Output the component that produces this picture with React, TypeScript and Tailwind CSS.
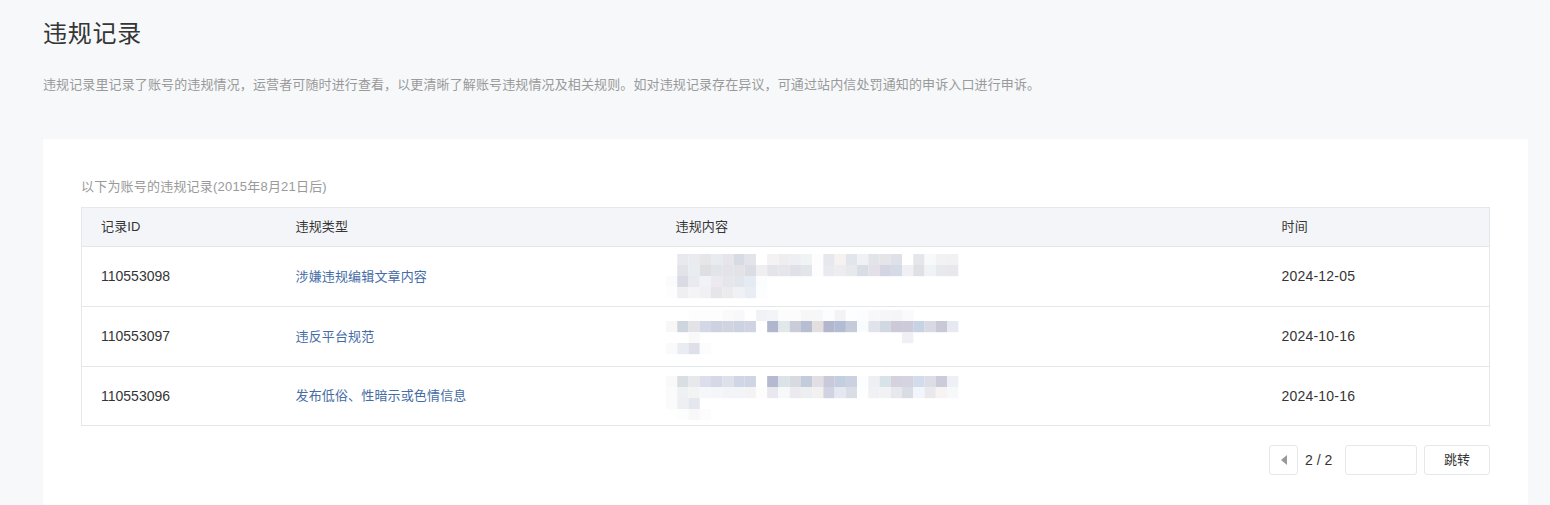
const fontStack = { fontFamily: '"Liberation Sans", "Noto Sans CJK SC", sans-serif' }

type Block = { top: number; start: number; colors: string[] }

// blurred text in the content column, one entry per line of mosaic tiles
const mosaics: Block[][] = [
  [
    { top: 6, start: 1, colors: ['e8e9ef', 'eaebef', 'e6e6e8', 'e8ecf0', 'e6e6ea', 'd8dbe3', 'e2e4ea', 'ffffff', 'f4f2f3', 'eeeef0', 'eeeff2', 'f1f4f5', 'fdfdfe', 'e6e8ee', 'f6f2ef', 'e2e5ec', 'f0f1f4', 'e3e3ea', 'e4e4e9', 'dfe1e8', 'ffffff', 'e3e6ea', 'f8f9fa', 'f2f2f5', 'f1f1f4'] },
    { top: 17, start: 1, colors: ['e2e3e8', 'e8edf1', 'dfdfe2', 'e1e4e8', 'e4e4e8', 'e3e2e7', 'dcdce5', 'eeeef3', 'e4e5ea', 'e6e6ea', 'dfe1e8', 'e2e5ea', 'fdfdfe', 'e9e9f0', 'edecef', 'e8e9ed', 'd9dde5', 'e3e1e7', 'd4d5e2', 'd5dbe6', 'f0f0f4', 'dee0e4', 'eff3f5', 'e8e9ed', 'e8e8ec'] },
    { top: 28, start: 0, colors: ['fafbfd', 'd9dae4', 'e9eaee', 'f0f2f7', 'eceaf0', 'e6e5e9', 'e1e5ec', 'e4ebf3', 'fafcfe'] },
    { top: 39, start: 0, colors: ['fdfdfd', 'efeff1', 'f4f4f6', 'f1f1f4', 'e6e5ea', 'ebebee', 'f0f1f4', 'e8edf3', 'fcfdfe'] },
  ],
  [
    { top: 2, start: 1, colors: ['ffffff', 'fdfdfd', 'fdfdfd', 'fdfdfd', 'fafafb', 'f8f8fa', 'ffffff', 'f1f2f6', 'f3f4f7', 'fcfcfc', 'fcfcfd', 'f7f7f8', 'f7f7f8', 'fcfdfe', 'f3f3f6', 'fefefe', 'fcfdfe', 'f8f8fa', 'f6f6f8', 'f5f5f7', 'fafafc'] },
    { top: 13, start: 0, colors: ['f9f7f5', 'cfd5de', 'e3e3e7', 'd4d8e6', 'cdd2e0', 'd1d3e0', 'cdd2e1', 'cfd3e2', 'ffffff', 'b0b6cd', 'e2e8e9', 'cacdd8', 'b8bed2', 'e3dfdf', 'b3b7ce', 'b2bcd5', 'c6cbd9', 'f9fcfd', 'e0e3ec', 'd1d8e2', 'cdc9d8', 'cdcad9', 'c6d3e5', 'd8d9e3', 'c9c8d7', 'e6e9f2'] },
    { top: 24, start: 2, colors: ['f9f9f9'] },
    { top: 24, start: 21, colors: ['f0f0f4'] },
    { top: 35, start: 0, colors: ['fafafa', 'e9edf3', 'dde0e8', 'fafcfe'] },
  ],
  [
    { top: 9, start: 0, colors: ['f9f9f9', 'd9dee2', 'e8e8ec', 'dcdeeb', 'd6d8e6', 'dfe1ea', 'd0d6e5', 'd0d5e5', 'ffffff', 'b5bad1', 'dae3e8', 'd8dae2', 'c3ccdb', 'e2dfe4', 'c9c9da', 'c3cfe0', 'cbd1e1', 'fcfdfe', 'ecf0f3', 'd8e2e9', 'd6d2dd', 'd5d3e0', 'd2dcea', 'dcdde7', 'cbcbda', 'edf0f5'] },
    { top: 20, start: 0, colors: ['fbfbfb', 'eff0f2', 'f3f3f4', 'f6f7fa', 'f5f6f9', 'f3f4f7', 'f3f4f7', 'f3f3f4', 'fdfdfd', 'e9e8ee', 'f7f8f8', 'ebebef', 'eceef0', 'f3f0f0', 'd0d3e1', 'e5e8f0', 'dadce6', 'fdfefe', 'f0f1f4', 'f1f2f4', 'e6e8ee', 'd9dce5', 'f3f5fc', 'e9e8ed', 'f6f3f2', 'f7f8f9'] },
    { top: 31, start: 0, colors: ['fbfbfb', 'eeeff3', 'e4e7ee'] },
    { top: 42, start: 1, colors: ['fdfdfd', 'f8f8f9', 'fcfcfd'] },
  ],
]

const records = [
  { id: '110553098', type: '涉嫌违规编辑文章内容', time: '2024-12-05' },
  { id: '110553097', type: '违反平台规范', time: '2024-10-16' },
  { id: '110553096', type: '发布低俗、性暗示或色情信息', time: '2024-10-16' },
]

function Mosaic({ blocks }: { blocks: Block[] }) {
  return (
    <svg width="300" height="58" className="block -ml-[10px]">
      {blocks.map((b, i) =>
        b.colors.map((c, j) => (
          <rect key={`${i}-${j}`} x={(b.start + j) * 11.24} y={b.top} width="11.3" height="11.2" fill={`#${c}`} />
        ))
      )}
    </svg>
  )
}

export default function App() {
  return (
    <div className="h-[505px] overflow-hidden bg-[#f6f8fa] px-[43px] pr-[22px]" style={fontStack}>
      <h1 className="pt-[17px] text-[24px] leading-[34px] font-normal tracking-[0.75px] text-[#353535]">违规记录</h1>
      <p className="mt-[17px] text-[13px] leading-[34px] tracking-[0.12px] text-[#9a9a9a]">
        违规记录里记录了账号的违规情况，运营者可随时进行查看，以更清晰了解账号违规情况及相关规则。如对违规记录存在异议，可通过站内信处罚通知的申诉入口进行申诉。
      </p>

      <div className="mt-[37px] rounded-[2px] bg-white px-[38px] pt-[38px] pb-[40px]">
        <div className="mb-[10px] text-[13px] leading-[20px] tracking-[0.2px] text-[#9a9a9a]">以下为账号的违规记录(2015年8月21日后)</div>

        <table className="w-full table-fixed border border-[#e4e8eb] border-collapse text-[13px] tracking-[0.15px] text-[#353535]">
          <colgroup>
            <col className="w-[195px]" />
            <col className="w-[380px]" />
            <col className="w-[606px]" />
            <col />
          </colgroup>
          <thead>
            <tr className="h-[39px] bg-[#f4f5f9] text-left">
              <th className="pl-[19px] font-normal">记录ID</th>
              <th className="pl-[19px] font-normal">违规类型</th>
              <th className="pl-[19px] font-normal">违规内容</th>
              <th className="pl-[19px] font-normal">时间</th>
            </tr>
          </thead>
          <tbody>
            {records.map((r, i) => (
              <tr key={r.id} className="h-[60px] border-t border-[#e4e8eb] last:h-[59px]">
                <td className="pl-[19px] text-[14px] tracking-normal">{r.id}</td>
                <td className="pl-[19px] text-[#456ca5]">{r.type}</td>
                <td className="pl-[19px]">
                  <Mosaic blocks={mosaics[i]} />
                </td>
                <td className="pl-[19px] text-[14px] tracking-[0.2px]">{r.time}</td>
              </tr>
            ))}
          </tbody>
        </table>

        <div className="mt-[19px] flex items-center justify-end text-[#353535]">
          <button className="flex h-[30px] w-[29px] items-center justify-center rounded-[3px] border border-[#e4e8eb] bg-white">
            <svg width="6" height="10" viewBox="0 0 6 10">
              <path d="M6 0 L6 10 L0 5 Z" fill="#9a9a9a" />
            </svg>
          </button>
          <span className="ml-[7px] w-[29px] text-[14px]">2 / 2</span>
          <input className="ml-[11px] h-[30px] w-[72px] rounded-[3px] border border-[#e4e8eb] bg-white" />
          <button className="ml-[7px] h-[30px] w-[66px] rounded-[3px] border border-[#e4e8eb] bg-white text-[13px]">跳转</button>
        </div>
      </div>
    </div>
  )
}
